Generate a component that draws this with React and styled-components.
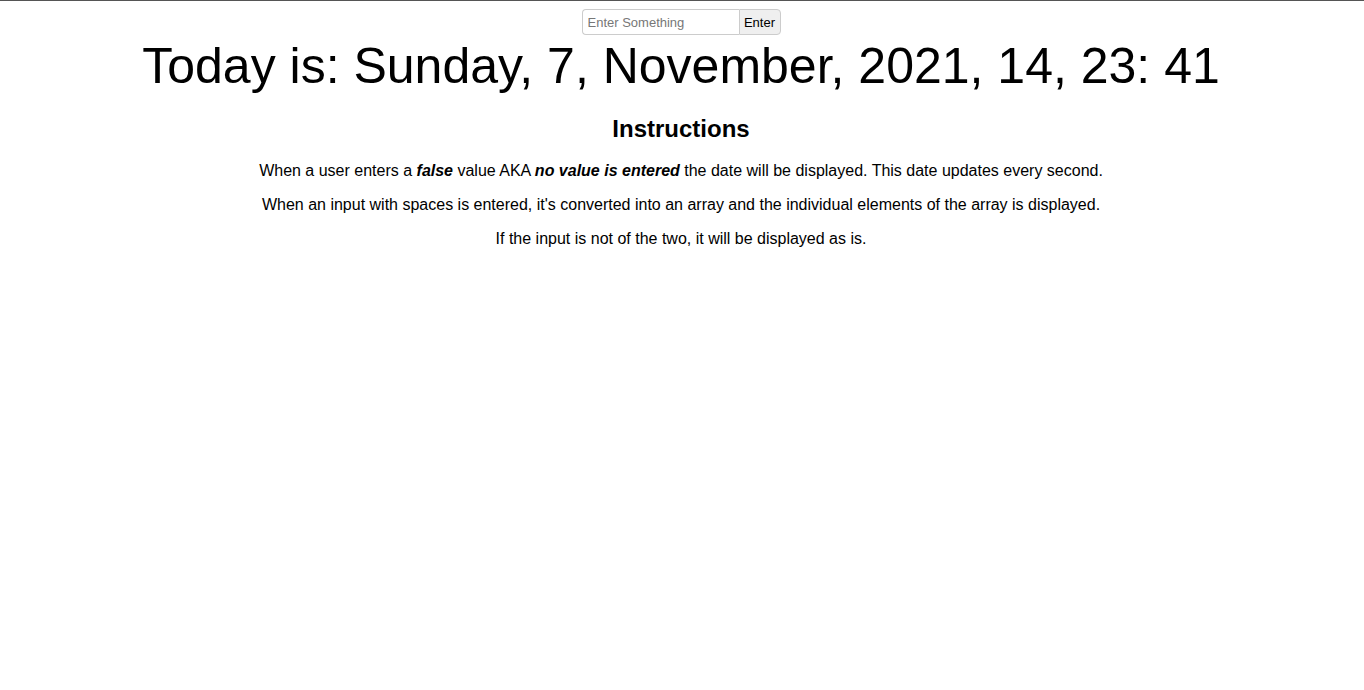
import React from "react";
import styled, { createGlobalStyle } from "styled-components";

const Global = createGlobalStyle`
  html, body { margin: 0; padding: 0; background: #fff; }
  body { font-family: "Liberation Sans", Arial, sans-serif; color: #000; border-top: 1px solid #555; }
`;

const Page = styled.div`
  display: flex;
  flex-direction: column;
  align-items: center;
  text-align: center;
  padding: 8px 2px 0 0;
`;

const Form = styled.form`
  display: flex;
  align-items: stretch;
`;

const Input = styled.input`
  box-sizing: border-box;
  width: 157px;
  height: 26px;
  border: 1px solid #ccc;
  border-right: none;
  border-radius: 4px 0 0 4px;
  padding: 0 5px;
  font-family: "Liberation Sans", Arial, sans-serif;
  font-size: 13px;
  &::placeholder { color: #777; }
`;

const Button = styled.button`
  box-sizing: border-box;
  width: 42px;
  height: 26px;
  border: 1px solid #ccc;
  border-radius: 0 4px 4px 0;
  background: #efefef;
  font-family: "Liberation Sans", Arial, sans-serif;
  font-size: 13px;
  color: #000;
  padding: 0;
`;

const Title = styled.h1`
  margin: 2px 0 0;
  font-size: 50px;
  font-weight: 400;
  line-height: normal;
`;

const Subtitle = styled.h2`
  margin: 20px 0 0;
  font-size: 24px;
  font-weight: 700;
  line-height: normal;
`;

const Para = styled.p`
  margin: ${(p) => (p.$first ? "19px" : "16px")} 0 0;
  font-size: 16px;
  line-height: normal;
`;

export default function App() {
  return (
    <>
      <Global />
      <Page>
        <Form onSubmit={(e) => e.preventDefault()}>
          <Input placeholder="Enter Something" />
          <Button type="submit">Enter</Button>
        </Form>
        <Title>Today is: Sunday, 7, November, 2021, 14, 23: 41</Title>
        <Subtitle>Instructions</Subtitle>
        <Para $first>
          When a user enters a <b><i>false</i></b> value AKA <b><i>no value is entered</i></b> the date will be displayed. This date updates every second.
        </Para>
        <Para>
          When an input with spaces is entered, it's converted into an array and the individual elements of the array is displayed.
        </Para>
        <Para>If the input is not of the two, it will be displayed as is.</Para>
      </Page>
    </>
  );
}
